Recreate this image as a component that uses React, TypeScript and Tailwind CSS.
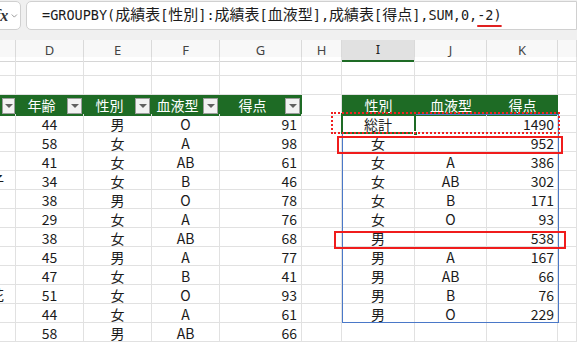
import React from 'react';

const GRID = 'grid grid-cols-[16px_68px_68px_68px_82px_40px_73px_72px_71px_1fr]';
const CELL = 'flex items-center h-full border-r border-b border-[#e1e1e1] overflow-hidden whitespace-nowrap';

const leftRows = [
  ['44', '男', 'O', '91'],
  ['58', '女', 'A', '98'],
  ['41', '女', 'AB', '61'],
  ['34', '女', 'B', '46'],
  ['38', '男', 'O', '78'],
  ['29', '女', 'A', '76'],
  ['38', '女', 'AB', '68'],
  ['45', '男', 'A', '77'],
  ['47', '女', 'B', '41'],
  ['51', '女', 'O', '93'],
  ['44', '女', 'A', '61'],
  ['58', '男', 'AB', '66'],
];

const rightRows = [
  ['総計', '', '1490'],
  ['女', '', '952'],
  ['女', 'A', '386'],
  ['女', 'AB', '302'],
  ['女', 'B', '171'],
  ['女', 'O', '93'],
  ['男', '', '538'],
  ['男', 'A', '167'],
  ['男', 'AB', '66'],
  ['男', 'B', '76'],
  ['男', 'O', '229'],
  ['', '', ''],
];

// tail of the name column that peeks in at the left edge
const nameTail: Record<number, string> = { 3: '子', 9: '花' };

function FilterButton({ narrow }: { narrow?: boolean }) {
  return (
    <span className={`${narrow ? 'w-[13px]' : 'w-[15px]'} h-[16px] shrink-0 bg-[#f2f2f2] border border-[#9c9c9c] flex items-center justify-center`}>
      <span className="w-0 h-0 border-l-[4px] border-r-[4px] border-t-[4px] border-l-transparent border-r-transparent border-t-[#606060]" />
    </span>
  );
}

function HeaderCell({ label }: { label: string }) {
  return (
    <div className="flex items-center h-full bg-[#1e6b25] pr-[2px]">
      <span className="flex-1 text-center text-white">{label}</span>
      <FilterButton />
    </div>
  );
}

function Formula() {
  const latin = "font-['DejaVu_Sans_Mono',monospace] text-[13.5px]";
  const cjk = "font-['Noto_Sans_CJK_JP',sans-serif] text-[15px]";
  return (
    <div className="whitespace-nowrap text-[#1b1b1b] leading-none">
      <span className={latin}>=GROUPBY(</span>
      <span className={cjk}>成績表</span>
      <span className={latin}>[</span>
      <span className={cjk}>性別</span>
      <span className={latin}>]:</span>
      <span className={cjk}>成績表</span>
      <span className={latin}>[</span>
      <span className={cjk}>血液型</span>
      <span className={latin}>],</span>
      <span className={cjk}>成績表</span>
      <span className={latin}>[</span>
      <span className={cjk}>得点</span>
      <span className={latin}>],SUM,0,</span>
      <span className={`${latin} underline decoration-[#e02020] decoration-[1.5px] underline-offset-[5px]`}>-2)</span>
    </div>
  );
}

export default function App() {
  const cols = ['', 'D', 'E', 'F', 'G', 'H', 'I', 'J', 'K', ''];
  return (
    <div className="relative w-[577px] h-[343px] overflow-hidden bg-white font-['Noto_Sans_CJK_JP',sans-serif] text-[14px] text-[#1b1b1b]">
      {/* formula bar */}
      <div className="h-[40px] bg-[#f0f0f0] flex items-start pt-px">
        <div className="w-[27px] h-[29px] ml-[-6px] bg-white border border-[#d0d0d0] rounded-r-[5px] flex items-center justify-end pr-[2px] gap-[3px]">
          <span className="font-['Liberation_Serif',serif] italic font-bold text-[16px] text-[#333] leading-none">fx</span>
          <svg width="9" height="6" viewBox="0 0 9 6" className="mt-px">
            <path d="M1 1l3.5 3.5L8 1" fill="none" stroke="#777" strokeWidth="1" />
          </svg>
        </div>
        <div className="ml-[5px] flex-1 h-[29px] bg-white border border-[#d0d0d0] rounded-l-[5px] flex items-center pl-[15px] pb-[2px]">
          <Formula />
        </div>
      </div>

      {/* column letters */}
      <div className={`${GRID} h-[17px] bg-[#f8f8f8] font-['Noto_Sans',sans-serif] text-[13px] text-[#444]`}>
        {cols.map((c, i) => (
          <div
            key={i}
            className={`flex items-center justify-center border-r border-[#dadada] ${c === 'I' ? 'bg-[#e1e1e1] border-b-2 border-b-[#1e6b25] text-[#222]' : 'border-b border-b-[#d6d6d6]'}`}
          >
            {c}
          </div>
        ))}
      </div>

      {/* two empty rows */}
      {[0, 1].map(r => (
        <div key={r} className={`${GRID} h-[19px]`}>
          {cols.map((_, i) => <div key={i} className={CELL} />)}
        </div>
      ))}

      {/* table headers */}
      <div className={`${GRID} h-[19px]`}>
        <div className="flex items-center h-full bg-[#1e6b25] pl-[2px]">
          <FilterButton narrow />
        </div>
        <HeaderCell label="年齢" />
        <HeaderCell label="性別" />
        <HeaderCell label="血液型" />
        <HeaderCell label="得点" />
        <div className={CELL} />
        <div className="flex items-center justify-center bg-[#1e6b25] text-white">性別</div>
        <div className="flex items-center justify-center bg-[#1e6b25] text-white">血液型</div>
        <div className="flex items-center justify-center bg-[#1e6b25] text-white">得点</div>
        <div className={CELL} />
      </div>

      {/* data rows */}
      {leftRows.map((row, r) => {
        const rr = rightRows[r];
        return (
          <div key={r} className={`${GRID} h-[19px] leading-none`}>
            <div className={`${CELL} justify-end pr-[11px]`}>{nameTail[r] ?? ''}</div>
            <div className={`${CELL} justify-center pt-px`}>{row[0]}</div>
            <div className={`${CELL} justify-center pt-px`}>{row[1]}</div>
            <div className={`${CELL} justify-center pt-px`}>{row[2]}</div>
            <div className={`${CELL} justify-end pr-[4px] pt-px`}>{row[3]}</div>
            <div className={CELL} />
            <div className={`${CELL} justify-center pt-px`}>{rr[0]}</div>
            <div className={`${CELL} justify-center pt-px`}>{rr[1]}</div>
            <div className={`${CELL} justify-end pr-[3px] pt-px`}>{rr[2]}</div>
            <div className={CELL} />
          </div>
        );
      })}

      {/* spill range border */}
      <div className="absolute left-[342px] top-[114px] w-[217px] h-[209px] border border-[#4a78c8] pointer-events-none" />
      {/* active cell */}
      <div className="absolute left-[341px] top-[113px] w-[75px] h-[21px] border-2 border-[#1e6b25] pointer-events-none" />
      <div className="absolute left-[413px] top-[131px] w-[5px] h-[5px] bg-[#1e6b25] border border-white pointer-events-none" />
      {/* annotations */}
      <div className="absolute left-[331px] top-[112px] w-[229px] h-[22px] border-2 border-dotted border-[#f02020] pointer-events-none" />
      <div className="absolute left-[337px] top-[136px] w-[226px] h-[18px] border-2 border-[#f01c1c] pointer-events-none" />
      <div className="absolute left-[334px] top-[231px] w-[232px] h-[18px] border-2 border-[#f01c1c] pointer-events-none" />
    </div>
  );
}
